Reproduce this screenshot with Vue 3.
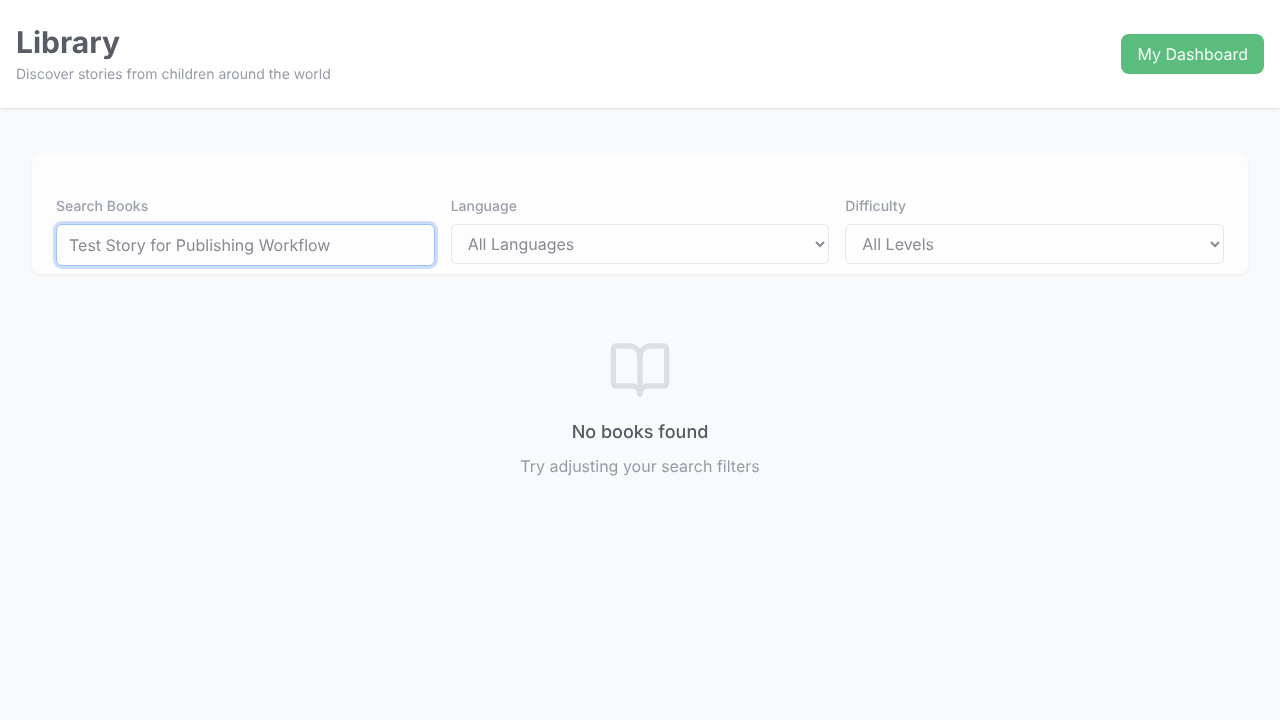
<script setup>
import { ref } from 'vue'

const query = ref('Test Story for Publishing Workflow')
</script>

<template>
  <div class="page">
    <header class="header layer">
      <div class="heading">
        <h1 class="title">Library</h1>
        <p class="subtitle">Discover stories from children around the world</p>
      </div>
      <button class="dashboard">My Dashboard</button>
    </header>
    <main class="main">
      <section class="filters layer">
        <div class="field">
          <label for="search">Search Books</label>
          <input id="search" v-model="query" class="search" type="text" spellcheck="false" />
        </div>
        <div class="field">
          <label for="language">Language</label>
          <select id="language"><option>All Languages</option></select>
        </div>
        <div class="field">
          <label for="level">Difficulty</label>
          <select id="level"><option>All Levels</option></select>
        </div>
      </section>
      <section class="empty layer">
        <svg class="book" viewBox="0 0 24 24" fill="none" stroke="currentColor" stroke-width="2" stroke-linecap="round" stroke-linejoin="round">
          <path d="M12 7v14" />
          <path d="M3 18a1 1 0 0 1-1-1V4a1 1 0 0 1 1-1h5a4 4 0 0 1 4 4 4 4 0 0 1 4-4h5a1 1 0 0 1 1 1v13a1 1 0 0 1-1 1h-6a3 3 0 0 0-3 3 3 3 0 0 0-3-3z" />
        </svg>
        <h3>No books found</h3>
        <p>Try adjusting your search filters</p>
      </section>
    </main>
  </div>
</template>

<style>
body {
  background: #f9fafc;
}
</style>

<style scoped>
.page, .page * {
  box-sizing: border-box;
}
.page {
  min-height: 100vh;
  background: #f9fafc;
  font-family: Inter, "Liberation Sans", sans-serif;
  font-size: 16px;
  line-height: 24px;
  text-rendering: geometricPrecision;
}
.layer {
  will-change: transform, opacity;
}
h1, h3, p {
  margin: 0;
}
.header {
  display: flex;
  align-items: center;
  justify-content: space-between;
  height: 108px;
  padding: 0 16px;
  background: #fff;
  box-shadow: 0 1px 3px rgba(0, 0, 0, 0.1), 0 1px 2px -1px rgba(0, 0, 0, 0.1);
}
.heading {
  padding-top: 2px;
}
.title {
  font-size: 30px;
  line-height: 36px;
  font-weight: 700;
  color: #575c67;
}
.subtitle {
  margin-top: 4px;
  font-size: 14px;
  line-height: 20px;
  color: #979ba5;
}
.dashboard {
  height: 40px;
  padding: 8px 16px;
  border: 0;
  border-radius: 8px;
  background: #5bbd7d;
  color: #f4fbf6;
  font: inherit;
  text-rendering: inherit;
}
.main {
  padding: 48px 32px;
}
.filters {
  display: grid;
  grid-template-columns: repeat(3, 1fr);
  gap: 16px;
  height: 118px;
  padding: 41px 24px 0;
  border-radius: 8px;
  background: #fdfdfe;
  box-shadow: 0 1px 3px rgba(0, 0, 0, 0.06), 0 1px 2px -1px rgba(0, 0, 0, 0.06);
}
.field {
  min-width: 0;
}
.field label {
  display: block;
  margin-bottom: 7px;
  font-size: 14px;
  line-height: 20px;
  font-weight: 500;
  color: #9a9fa8;
}
.search {
  display: block;
  width: 100%;
  height: 42px;
  padding: 8px 12px;
  border: 1px solid #9cc0fc;
  border-radius: 6px;
  background: #fdfdfe;
  color: #888b93;
  font: inherit;
  text-rendering: inherit;
  outline: none;
  box-shadow: 0 0 0 3px #cdddfc;
}
select {
  display: block;
  width: 100%;
  height: 40px;
  padding: 0 12px;
  border: 1px solid #e6e7ea;
  border-radius: 6px;
  background: #fdfdfe;
  color: #888b93;
  font: inherit;
  text-rendering: inherit;
}
.empty {
  display: flex;
  flex-direction: column;
  align-items: center;
  padding-top: 64px;
}
.book {
  width: 64px;
  height: 64px;
  color: #dcdfe4;
}
.empty h3 {
  margin-top: 17px;
  font-size: 18px;
  line-height: 28px;
  font-weight: 500;
  color: #555a65;
}
.empty p {
  margin-top: 7px;
  color: #979ba5;
}
</style>
